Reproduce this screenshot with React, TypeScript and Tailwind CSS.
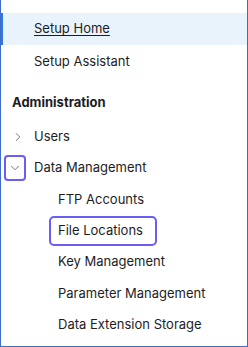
import { ChevronDown, ChevronRight } from "lucide-react";

const subItems = [
  { label: "FTP Accounts", h: "h-[31px]" },
  { label: "File Locations", h: "h-[31px]", focused: true },
  { label: "Key Management", h: "h-[32px]" },
  { label: "Parameter Management", h: "h-[31px]" },
  { label: "Data Extension Storage", h: "h-[31px]" },
];

export default function App() {
  return (
    <div
      className="w-[248px] h-[347px] bg-white border-x border-b border-[#3f6cc9] pt-[13px] text-[13px] text-[#1d1d1f] overflow-hidden"
      style={{ fontFamily: "Inter, 'Liberation Sans', sans-serif" }}
    >
      {/* top links */}
      <div className="flex h-8 items-center bg-[#e9f3fc] border-l-[3px] border-[#2c7be5] -ml-px pl-[31px]">
        <a className="underline underline-offset-2 text-[#1d1d1f]">Setup Home</a>
      </div>
      <div className="flex h-8 items-center pl-[33px] pt-px">Setup Assistant</div>

      {/* section */}
      <div className="mt-[8px] flex h-9 items-center pl-[11px] font-bold">Administration</div>

      <div className="flex h-[31px] items-center">
        <span className="flex w-[33px] justify-center pl-px">
          <ChevronRight className="w-[14px] h-[14px] text-[#6b6b6b]" strokeWidth={1.6} />
        </span>
        <span>Users</span>
      </div>
      <div className="flex h-8 items-center">
        <span className="ml-[3px] mr-[8px] flex w-[22px] h-[26px] items-center justify-center rounded-[4px] border-2 border-[#6b5cf6]">
          <ChevronDown className="w-[14px] h-[14px] text-[#6b6b6b]" strokeWidth={1.6} />
        </span>
        <span>Data Management</span>
      </div>

      {subItems.map((item) => (
        <div key={item.label} className={`flex ${item.h} items-center`}>
          {item.focused ? (
            <span className="ml-[48px] flex h-[30px] items-center rounded-[5px] border-2 border-[#6b5cf6] pl-[7px] pr-[12px]">
              {item.label}
            </span>
          ) : (
            <span className="pl-[57px]">{item.label}</span>
          )}
        </div>
      ))}
    </div>
  );
}
